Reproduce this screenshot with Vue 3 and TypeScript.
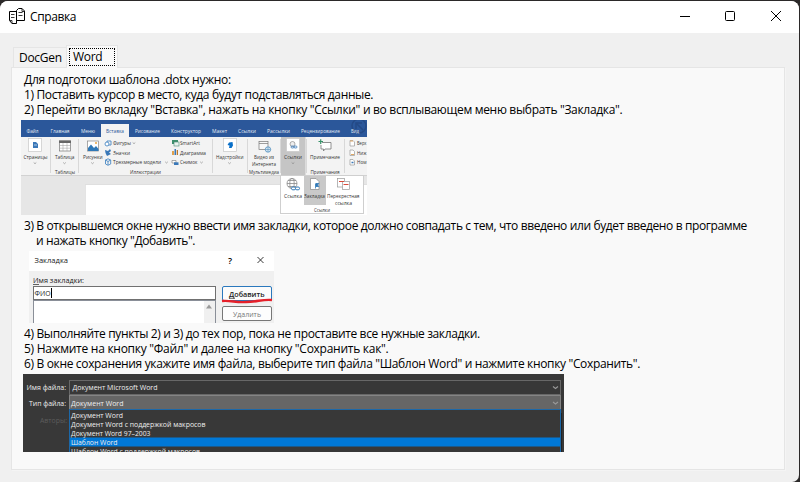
<script setup lang="ts">
interface Line {
  text: string
  spacing: number
  indent?: boolean
}

interface Label {
  text: string
  x: number
  y: number
  w: number
}

const intro: Line[] = [
  { text: 'Для подготоки шаблона .dotx нужно:', spacing: -0.28 },
  { text: '1) Поставить курсор в место, куда будут подставляться данные.', spacing: -0.36 },
  { text: '2) Перейти во вкладку "Вставка", нажать на кнопку "Ссылки" и во всплывающем меню выбрать "Закладка".', spacing: -0.31 },
]
const naming: Line[] = [
  { text: '3) В открывшемся окне нужно ввести имя закладки, которое должно совпадать с тем, что введено или будет введено в программе', spacing: -0.383 },
  { text: 'и нажать кнопку "Добавить".', spacing: -0.38, indent: true },
]
const saving: Line[] = [
  { text: '4) Выполняйте пункты 2) и 3) до тех пор, пока не проставите все нужные закладки.', spacing: -0.37 },
  { text: '5) Нажмите на кнопку "Файл" и далее на кнопку "Сохранить как".', spacing: -0.27 },
  { text: '6) В окне сохранения укажите имя файла, выберите тип файла "Шаблон Word" и нажмите кнопку "Сохранить".', spacing: -0.34 },
]

const ribbonTabs: Label[] = [
  { text: 'Файл', x: 26.5, y: 133, w: 12 },
  { text: 'Главная', x: 50.5, y: 133, w: 19 },
  { text: 'Меню', x: 81, y: 133, w: 14 },
  { text: 'Рисование', x: 135, y: 133, w: 25 },
  { text: 'Конструктор', x: 171, y: 133, w: 30 },
  { text: 'Макет', x: 212, y: 133, w: 15 },
  { text: 'Ссылки', x: 238, y: 133, w: 18 },
  { text: 'Рассылки', x: 267, y: 133, w: 23 },
  { text: 'Рецензирование', x: 301, y: 133, w: 39 },
  { text: 'Вид', x: 351, y: 133, w: 8 },
]
const ribbonLabels: Label[] = [
  { text: 'Страницы', x: 23.5, y: 159, w: 24 },
  { text: 'Таблица', x: 55, y: 159, w: 19.5 },
  { text: 'Таблицы', x: 55, y: 174, w: 20 },
  { text: 'Рисунки', x: 83, y: 159, w: 19.5 },
  { text: 'Фигуры', x: 113, y: 145, w: 18 },
  { text: 'Значки', x: 113, y: 155, w: 17 },
  { text: 'Трехмерные модели', x: 113, y: 164.3, w: 48 },
  { text: 'Иллюстрации', x: 130, y: 174, w: 31 },
  { text: 'SmartArt', x: 180, y: 145, w: 20 },
  { text: 'Диаграмма', x: 180, y: 155, w: 26 },
  { text: 'Снимок', x: 180, y: 164.3, w: 17.5 },
  { text: 'Надстройки', x: 216, y: 159, w: 27.5 },
  { text: 'Видео из', x: 254, y: 159, w: 20 },
  { text: 'Интернета', x: 252, y: 166.3, w: 24 },
  { text: 'Мультимедиа', x: 249, y: 174, w: 30 },
  { text: 'Ссылки', x: 284, y: 159, w: 18 },
  { text: 'Примечание', x: 310, y: 159, w: 30 },
  { text: 'Примечания', x: 310.5, y: 174, w: 29 },
  { text: 'Верх', x: 357, y: 145, w: 9.5 },
  { text: 'Ниж', x: 357, y: 155, w: 9.5 },
  { text: 'Ном', x: 357, y: 164.3, w: 9.5 },
]
const menuLabels: Label[] = [
  { text: 'Ссылка', x: 284, y: 197.5, w: 18 },
  { text: 'Закладка', x: 304, y: 197.5, w: 21 },
  { text: 'Перекрестная', x: 327, y: 197.5, w: 32.5 },
  { text: 'ссылка', x: 335, y: 204.5, w: 17 },
  { text: 'Ссылки', x: 314, y: 212.3, w: 16 },
]
const carets: [number, number][] = [
  [35, 163], [64.5, 163], [92.5, 163], [134, 143], [166.5, 162.3], [201.5, 162.3], [229.5, 163], [293, 163],
]
const options: Label[] = [
  { text: 'Документ Word', x: 71, y: 418, w: 52 },
  { text: 'Документ Word с поддержкой макросов', x: 71, y: 427, w: 134.5 },
  { text: 'Документ Word 97–2003', x: 71, y: 436, w: 79.5 },
  { text: 'Шаблон Word', x: 71, y: 445, w: 46.5 },
  { text: 'Шаблон Word с поддержкой макросов', x: 71, y: 454, w: 129 },
]
</script>

<template>
  <div class="desktop">
    <div class="window">
      <header class="titlebar">
        <svg class="logo" width="18" height="18" viewBox="8 7 18 18">
          <path d="M16.500 11.500H9.500V20.500L12 23.500H16.500Z" fill="#fff" stroke="#000" />
          <path d="M16.500 10.500L18.500 8.500H22L24.500 11V20.500H16.500Z" fill="#fff" stroke="#000" />
          <path d="M9.500 20.500H12V23.500M22 8.500V11.500H24.500M11 14.500H14.500M11 17.500H14.500M18.500 12.500H22.500M18.500 15.500H22.500" fill="none" stroke="#222" stroke-width=".9" />
        </svg>
        <span class="title">Справка</span>
        <div class="controls">
          <svg width="45" height="32" viewBox="0 0 45 32"><path d="M17 15.500H27" stroke="#000" /></svg>
          <svg width="46" height="32" viewBox="0 0 46 32"><rect x="17.500" y="10.500" width="9" height="9" rx="1" fill="none" stroke="#000" /></svg>
          <svg width="45" height="32" viewBox="0 0 45 32"><path d="M17 10L27 20M27 10L17 20" stroke="#000" /></svg>
        </div>
      </header>

      <main class="client">
        <nav class="tabs">
          <div class="tab">DocGen</div>
          <div class="tab active"><span class="focus">Word</span></div>
        </nav>
        <section class="panel">
          <p v-for="l in intro" :key="l.text" class="line" :style="{ letterSpacing: l.spacing + 'px' }">{{ l.text }}</p>

          <svg class="ribbon" width="346" height="95" viewBox="21 120 346 95">
            <rect x="21" y="120" width="346" height="95" fill="#e6e6e6" />
            <rect x="21" y="120" width="346" height="18" fill="#2b579a" />
            <g fill="none" stroke="#244a86" stroke-width="1.5">
              <circle cx="359" cy="126" r="7" />
              <path d="M356 129V123H362M356 123L363 130" />
            </g>
            <rect x="101" y="124" width="28" height="15" fill="#f3f3f3" />
            <text x="106" y="133" textLength="18" lengthAdjust="spacingAndGlyphs" class="tiny selected">Вставка</text>
            <g class="tiny light">
              <text v-for="t in ribbonTabs" :key="t.text" :x="t.x" :y="t.y" :textLength="t.w" lengthAdjust="spacingAndGlyphs">{{ t.text }}</text>
            </g>
            <rect x="21" y="137" width="346" height="38" fill="#f3f3f3" />
            <path d="M21 175.500H367" stroke="#d2d2d2" />
            <path d="M50.500 139V173M78.500 139V173M212.500 139V173M247.500 139V173M280.500 139V173M306.500 139V173M344.500 139V173" stroke="#d8d8d8" />
            <rect x="281" y="137" width="24.500" height="38" fill="#c5c5c5" />

            <g fill="#fff" stroke="#c8c8c8" stroke-width=".7">
              <rect x="28.500" y="138.500" width="13" height="13" />
              <rect x="223.500" y="138.500" width="13" height="13" />
              <rect x="286.500" y="138.500" width="13" height="13" />
            </g>
            <path d="M33 142H36L38 144V148H33Z" fill="#3a78b8" />
            <path d="M34 145H37" stroke="#fff" stroke-width=".6" />
            <rect x="59.500" y="141" width="11" height="10" fill="#fff" stroke="#777" stroke-width=".7" />
            <rect x="59" y="140.500" width="12" height="2.500" fill="#666" />
            <path d="M60 145.500H71M60 148.200H71M63 143V151M67 143V151" stroke="#999" stroke-width=".5" />
            <rect x="87.500" y="141" width="11" height="10" fill="#fff" stroke="#888" stroke-width=".7" />
            <path d="M88 151V148L91 144.500L94 148L96 146L98.500 149V151Z" fill="#2f78b7" />
            <circle cx="96" cy="143" r="1" fill="#e8a33d" />
            <g fill="none" stroke="#4b89c4" stroke-width=".9">
              <path d="M107 141H111V145H107Z" />
              <circle cx="107" cy="144" r="2" fill="#fff" />
              <path d="M105.500 160L108 158.800L110.700 160V164L108 165.300L105.500 164ZM105.500 160L108 161.500L110.700 160M108 161.500V165" />
            </g>
            <path d="M105 150L108 151L110 149L111 151L109 152.500L111 154L107 156L105.500 153Z" fill="#3a78b8" />
            <rect x="172" y="140" width="6" height="4" fill="#3d8f6e" />
            <rect x="174" y="142" width="5" height="4" fill="#e9f3ef" stroke="#4d8b76" stroke-width=".6" />
            <path d="M172 151H174V155H172Z" fill="#e0a04c" />
            <path d="M174.500 149H176V155H174.500Z" fill="#3a78b8" />
            <path d="M176.700 150H178V155H176.700Z" fill="#c0782a" />
            <path d="M172 160.500H176V163H172Z" fill="#fff" stroke="#777" stroke-width=".6" />
            <rect x="174" y="162.300" width="4.500" height="2.700" fill="#3a78b8" />
            <path d="M227.500 145L229 142.500L232.500 142L233 145.500L231.500 148H229L229.500 145.500Z" fill="#0a70c9" />
            <rect x="259" y="141.500" width="9" height="8" fill="#f8f8f8" stroke="#777" stroke-width=".7" />
            <path d="M259 143.500H268" stroke="#777" stroke-width=".7" />
            <circle cx="268" cy="149.500" r="2.700" fill="#dcebf5" stroke="#4f8dbc" stroke-width=".8" />
            <path d="M265.500 149.500H270.500M268 147V152" stroke="#4f8dbc" stroke-width=".6" />
            <circle cx="292.500" cy="144" r="2.500" fill="#eee" stroke="#8a8a8a" stroke-width=".7" />
            <rect x="291" y="146" width="3" height="2" rx="1" fill="none" stroke="#3a78b8" stroke-width=".8" />
            <rect x="294" y="146" width="3" height="2" rx="1" fill="none" stroke="#3a78b8" stroke-width=".8" />
            <path d="M322 142.500H331V149H325L323.500 151V149H321V145" fill="#fff" stroke="#777" stroke-width=".8" />
            <path d="M318.500 141.500H323M320.700 139.300V144" stroke="#369268" stroke-width="1.200" />
            <g fill="#fff" stroke="#999" stroke-width=".7">
              <path d="M350 140.500H353L354.500 142V146H350Z" />
              <path d="M350 150H353L354.500 151.500V155.500H350Z" />
              <path d="M350 159.500H353L354.500 161V165H350Z" />
            </g>
            <path d="M350 141H353M351 154.500H354" stroke="#e0a865" />
            <path d="M351.500 162.500H353.500" stroke="#3a78b8" stroke-width="1.300" />

            <g class="tiny">
              <text v-for="t in ribbonLabels" :key="t.text + t.y" :x="t.x" :y="t.y" :textLength="t.w" lengthAdjust="spacingAndGlyphs">{{ t.text }}</text>
            </g>
            <path v-for="c in carets" :key="c[0]" :d="`M${c[0] - 1.3} ${c[1] - 0.5}l1.300 1.200l1.300 -1.200`" fill="none" stroke="#777" stroke-width=".6" />

            <rect x="85.500" y="185" width="282" height="30" fill="#fff" />
            <path d="M85.500 215V184.500H367" fill="none" stroke="#dadada" stroke-width=".6" />
            <rect x="280.500" y="175.500" width="83" height="38" fill="#fff" stroke="#cfcfcf" />
            <rect x="304" y="176" width="22" height="29" fill="#c9c9c9" />
            <g fill="none" stroke="#8a8a8a" stroke-width=".8">
              <circle cx="292" cy="183.500" r="5" fill="#fff" />
              <path d="M287 183.500H297M288 180.500H296M288 186.500H296" />
              <ellipse cx="292" cy="183.500" rx="2.200" ry="5" />
            </g>
            <g fill="#fff" stroke="#2f78b7" stroke-width="1">
              <rect x="291.500" y="187" width="4" height="2.800" rx="1.300" />
              <rect x="295.500" y="187" width="4" height="2.800" rx="1.300" />
            </g>
            <path d="M310.500 178.500H316L319 181.500V189.500H310.500Z" fill="#fff" stroke="#888" stroke-width=".7" />
            <path d="M315.500 183.500V188.500M316 183.500H318.800L317.500 185L318.800 186.500H316Z" fill="#2f78b7" stroke="#2f78b7" stroke-width=".8" />
            <rect x="337.500" y="178.500" width="7" height="8.500" fill="#fff" stroke="#999" stroke-width=".7" />
            <rect x="342.500" y="181.500" width="7" height="8" fill="#fff" stroke="#999" stroke-width=".7" />
            <path d="M339 181.500H344M343.500 184.500H348.500" stroke="#d94c3c" stroke-width="1.200" />
            <g class="tiny">
              <text v-for="t in menuLabels" :key="t.text + t.y" :x="t.x" :y="t.y" :textLength="t.w" lengthAdjust="spacingAndGlyphs">{{ t.text }}</text>
            </g>
          </svg>

          <p v-for="l in naming" :key="l.text" class="line" :class="{ indent: l.indent }" :style="{ letterSpacing: l.spacing + 'px' }">{{ l.text }}</p>

          <svg class="dialog" width="245" height="72" viewBox="29 251 245 72">
            <rect x="29" y="251" width="245" height="72" fill="#f0f0f0" />
            <rect x="29" y="251" width="245" height="20" fill="#fff" />
            <g class="small">
              <text x="34.500" y="263" textLength="33.500" lengthAdjust="spacingAndGlyphs">Закладка</text>
              <text x="33" y="283" textLength="51" lengthAdjust="spacingAndGlyphs">Имя закладки:</text>
            </g>
            <path d="M33 284.500H39" stroke="#222" stroke-width=".7" />
            <text x="228" y="263.500" class="question">?</text>
            <path d="M257.500 257L263.500 263M263.500 257L257.500 263" stroke="#222" stroke-width=".9" />
            <rect x="33.500" y="286.500" width="182" height="13" fill="#fff" stroke="#707070" />
            <text x="34.500" y="296" textLength="16" lengthAdjust="spacingAndGlyphs" class="small">ФИО</text>
            <path d="M51.500 288V298" stroke="#000" />
            <rect x="33.500" y="300.500" width="182" height="26" fill="#fff" stroke="#8a8f98" />
            <rect x="204" y="301" width="11" height="22" fill="#f0f0f0" />
            <path d="M206 308.500L209 304.500L212 308.500Z" fill="#999" />
            <rect x="222.500" y="286.500" width="49" height="14" rx="1.500" fill="#fbfbfb" stroke="#2a78bd" />
            <rect x="222.500" y="306.500" width="49" height="14" rx="1.500" fill="#fdfdfd" stroke="#777" />
            <text x="229" y="296.500" textLength="35.500" lengthAdjust="spacingAndGlyphs" class="small strong">Добавить</text>
            <path d="M229 298.300H235" stroke="#222" stroke-width=".7" />
            <text x="233" y="316.500" textLength="28" lengthAdjust="spacingAndGlyphs" class="small muted">Удалить</text>
            <path d="M222 301C230 300 237 303 246 302C257 302 263 299 272 300" fill="none" stroke="#e5202a" stroke-width="2.400" />
          </svg>

          <p v-for="l in saving" :key="l.text" class="line" :style="{ letterSpacing: l.spacing + 'px' }">{{ l.text }}</p>

          <svg class="save" width="541" height="78" viewBox="23 374 541 78">
            <rect x="23" y="374" width="541" height="78" fill="#383838" />
            <rect x="69.500" y="380.500" width="491" height="14" fill="#383838" stroke="#686868" />
            <rect x="69.500" y="395.500" width="491" height="14" fill="#666" stroke="#858585" />
            <rect x="69.500" y="409.500" width="491" height="50" fill="#383838" stroke="#1c68a8" />
            <rect x="70" y="437.500" width="490" height="9" fill="#0078d7" />
            <path d="M561.500 413V452" stroke="#242424" />
            <path d="M553 386.500L555.500 388.500L558 386.500M553 402L555.500 404L558 402" fill="none" stroke="#999" stroke-width="1.100" />
            <g class="file">
              <text x="26.500" y="390.300" textLength="39.500" lengthAdjust="spacingAndGlyphs">Имя файла:</text>
              <text x="72.500" y="389.800" textLength="85" lengthAdjust="spacingAndGlyphs">Документ Microsoft Word</text>
              <text x="29" y="405.600" textLength="37" lengthAdjust="spacingAndGlyphs">Тип файла:</text>
              <text x="71" y="405.600" textLength="52.500" lengthAdjust="spacingAndGlyphs">Документ Word</text>
              <text x="40" y="422.500" textLength="27" lengthAdjust="spacingAndGlyphs" class="disabled">Авторы:</text>
              <text v-for="t in options" :key="t.text" :x="t.x" :y="t.y" :textLength="t.w" lengthAdjust="spacingAndGlyphs">{{ t.text }}</text>
            </g>
          </svg>
        </section>
      </main>
    </div>
  </div>
</template>

<style>
body {
  margin: 0;
  overflow: hidden;
}
</style>

<style scoped>
.desktop {
  box-sizing: border-box;
  width: 800px;
  height: 482px;
  padding: 1px 1px 0 0;
  background: #2b2929;
  font: 12px/15px "Open Sans", "Noto Sans", sans-serif;
  color: #000;
}
.window {
  display: flex;
  flex-direction: column;
  height: 481px;
  background: #f0f0f0;
  border-radius: 8px 8px 7px 0;
  overflow: hidden;
}
.titlebar {
  display: flex;
  height: 32px;
  background: #fff;
}
.logo {
  margin: 6px 0 0 8px;
}
.title {
  margin: 8px 0 0 4px;
  letter-spacing: -0.4px;
}
.controls {
  display: flex;
  margin-left: auto;
}
.client {
  display: flex;
  flex-direction: column;
  padding: 12px 14px 0 11px;
}
.tabs {
  display: flex;
  align-items: flex-end;
  height: 22px;
  padding-left: 2px;
}
.tab {
  box-sizing: border-box;
  width: 53px;
  height: 20px;
  padding: 2px 0 0 5px;
  border: 1px solid #e5e5e5;
  border-width: 1px 0 0 1px;
  background: #f2f2f2;
  letter-spacing: -0.3px;
}
.tab.active {
  width: 52px;
  height: 23px;
  margin-bottom: -1px;
  padding: 2px 1px 0 2px;
  border-width: 1px 1px 0 1px;
  background: #f9f9f9;
  z-index: 1;
}
.focus {
  display: block;
  box-sizing: border-box;
  width: 46px;
  height: 18px;
  padding-left: 3px;
  border: 1px dotted #000;
  line-height: 15px;
}
.panel {
  box-sizing: border-box;
  width: 774px;
  height: 403px;
  padding: 4px 0 0 12px;
  border: 1px solid #e5e5e5;
  background: #f9f9f9;
  box-shadow: 1px 1px #f4f4f4;
}
.line {
  margin: 0;
  white-space: pre;
}
.indent {
  padding-left: 12px;
}
.ribbon,
.dialog,
.save {
  display: block;
  margin: 3px 0 3px -3px;
}
.dialog {
  margin-left: 5px;
}
.save {
  margin-left: -1px;
}
.tiny {
  font-size: 5.8px;
  fill: #333;
}
.tiny.light {
  fill: #e4ebf5;
}
.tiny.selected {
  fill: #2b579a;
}
.small {
  font-size: 7.7px;
  fill: #222;
}
.small.strong {
  font-weight: 600;
}
.small.muted {
  fill: #777;
}
.question {
  font-size: 9px;
  font-weight: 600;
}
.file {
  font-size: 7.4px;
  fill: #eee;
}
.disabled {
  fill: #5c5c5c;
}
</style>
